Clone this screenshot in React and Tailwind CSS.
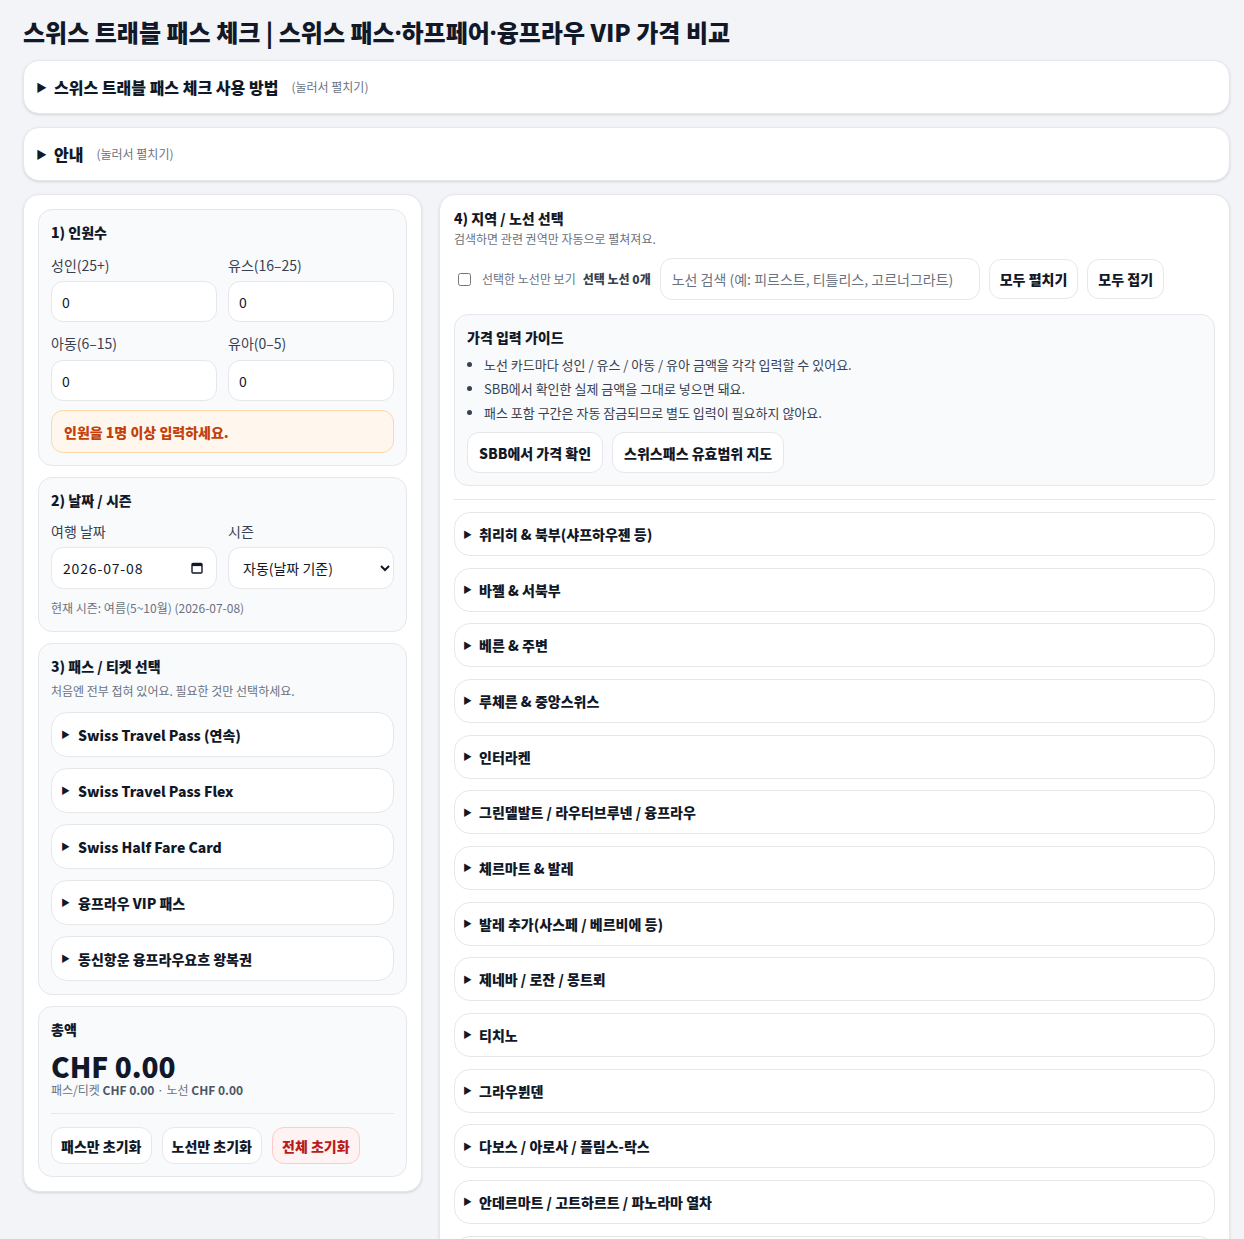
import React from 'react';

const regions = [
  '취리히 & 북부(샤프하우젠 등)',
  '바젤 & 서북부',
  '베른 & 주변',
  '루체른 & 중앙스위스',
  '인터라켄',
  '그린델발트 / 라우터브루넨 / 융프라우',
  '체르마트 & 발레',
  '발레 추가(사스페 / 베르비에 등)',
  '제네바 / 로잔 / 몽트뢰',
  '티치노',
  '그라우뷘덴',
  '다보스 / 아로사 / 플림스-락스',
  '안데르마트 / 고트하르트 / 파노라마 열차',
  '기타 노선',
];

const passes = [
  'Swiss Travel Pass (연속)',
  'Swiss Travel Pass Flex',
  'Swiss Half Fare Card',
  '융프라우 VIP 패스',
  '동신항운 융프라우요흐 왕복권',
];

// 접힌 상태의 카드형 summary
const Collapsed = ({ label, className = '', pad = 'px-[9px]', gap = 'mr-[8px]' }) => (
  <details className={`bg-white border border-[#e5e7eb] rounded-2xl ${className}`}>
    <summary className={`list-none flex items-center h-full cursor-pointer text-sm font-extrabold text-[#111827] ${pad}`}>
      <span className={`text-[9px] leading-none ${gap}`}>▶</span>
      {label}
    </summary>
  </details>
);

const Field = ({ label, children, gap = 'mb-[6px]' }) => (
  <div>
    <div className={`text-sm text-[#374151] leading-5 ${gap}`}>{label}</div>
    {children}
  </div>
);

const NumberInput = () => (
  <input
    type="text"
    defaultValue="0"
    className="w-full h-[41px] bg-white border border-[#e5e7eb] rounded-xl px-[10px] text-sm text-[#111827] outline-none"
  />
);

const Section = ({ title, children, className = 'pb-[12px]' }) => (
  <section className={`bg-[#f8fafc] border border-[#e5e7eb] rounded-[14px] px-[12px] pt-[12px] ${className}`}>
    <h3 className="text-sm font-extrabold text-[#111827] leading-5">{title}</h3>
    {children}
  </section>
);

const Btn = ({ children, className = '' }) => (
  <button className={`rounded-xl border text-sm font-extrabold ${className}`}>
    {children}
  </button>
);

const CalendarIcon = () => (
  <svg width="12" height="12" viewBox="0 0 12 12" fill="none">
    <rect x="1" y="1.5" width="10" height="9.5" rx="1" stroke="#111827" strokeWidth="1.4" />
    <rect x="1" y="1.5" width="10" height="2.6" fill="#111827" />
  </svg>
);

const App = () => {
  return (
    <div
      className="min-h-screen bg-[#f3f4f7] text-[#111827]"
      style={{ fontFamily: '"Noto Sans CJK KR", "Noto Sans", sans-serif' }}
    >
      <div className="pl-[23px] pr-[14px] pt-[16px]">
        <h1 className="text-2xl font-extrabold leading-8 mb-[11px]">
          스위스 트래블 패스 체크 | 스위스 패스<span className="font-['Noto_Sans']">·</span>하프페어<span className="font-['Noto_Sans']">·</span>융프라우 VIP 가격 비교
        </h1>

        {/* 상단 안내 */}
        <details className="bg-white border border-[#e5e7eb] rounded-2xl shadow-sm mb-[13px]">
          <summary className="list-none flex items-center h-[52px] px-[12px] cursor-pointer">
            <span className="text-[11px] mr-[7px]">▶</span>
            <span className="text-base font-extrabold">스위스 트래블 패스 체크 사용 방법</span>
            <span className="text-xs text-[#6b7280] ml-[13px]">(눌러서 펼치기)</span>
          </summary>
        </details>
        <details className="bg-white border border-[#e5e7eb] rounded-2xl shadow-sm mb-[13px]">
          <summary className="list-none flex items-center h-[52px] px-[12px] cursor-pointer">
            <span className="text-[11px] mr-[7px]">▶</span>
            <span className="text-base font-extrabold">안내</span>
            <span className="text-xs text-[#6b7280] ml-[13px]">(눌러서 펼치기)</span>
          </summary>
        </details>

        <div className="grid grid-cols-[399px_1fr] gap-[17px] items-start">
          {/* 왼쪽 패널 */}
          <div className="bg-white border border-[#e5e7eb] rounded-2xl shadow-sm p-[14px] flex flex-col gap-[11px]">
            <Section title="1) 인원수">
              <div className="grid grid-cols-2 gap-x-[11px] mt-[13px]">
                <Field label="성인(25+)"><NumberInput /></Field>
                <Field label="유스(16–25)"><NumberInput /></Field>
              </div>
              <div className="grid grid-cols-2 gap-x-[11px] mt-[11px]">
                <Field label="아동(6–15)" gap="mb-[7px]"><NumberInput /></Field>
                <Field label="유아(0–5)" gap="mb-[7px]"><NumberInput /></Field>
              </div>
              <div className="mt-[9px] h-[43px] flex items-center px-[12px] bg-[#fff7ed] border border-[#fed7aa] rounded-xl text-sm font-extrabold text-[#c2410c]">
                인원을 1명 이상 입력하세요.
              </div>
            </Section>

            <Section title="2) 날짜 / 시즌" className="pb-[15px]">
              <div className="grid grid-cols-2 gap-x-[11px] mt-[11px]">
                <Field label="여행 날짜">
                  <div className="w-full h-[42px] bg-white border border-[#e5e7eb] rounded-xl pl-[11px] pr-[13px] flex items-center justify-between text-sm tracking-[0.06em] text-[#111827]">
                    <span>2026-07-08</span>
                    <CalendarIcon />
                  </div>
                </Field>
                <Field label="시즌">
                  <select className="w-full h-[42px] bg-white border border-[#e5e7eb] rounded-xl px-[10px] text-sm text-[#111827] outline-none">
                    <option>자동(날짜 기준)</option>
                  </select>
                </Field>
              </div>
              <p className="text-xs text-[#6b7280] mt-[11px] leading-4">현재 시즌: 여름(5~10월) (2026-07-08)</p>
            </Section>

            <Section title="3) 패스 / 티켓 선택" className="pb-[13px]">
              <p className="text-xs text-[#6b7280] mt-[7px] leading-4">처음엔 전부 접혀 있어요. 필요한 것만 선택하세요.</p>
              <div className="flex flex-col gap-[11px] mt-[13px]">
                {passes.map((p) => (
                  <Collapsed key={p} label={p} className="h-[45px]" />
                ))}
              </div>
            </Section>

            <Section title="총액">
              <div className="text-[28px] font-black leading-[28px] mt-[13px]">CHF 0.00</div>
              <p className="text-xs text-[#6b7280] leading-4 mt-[2px]">
                패스/티켓 <b className="text-[#4b5563]">CHF 0.00</b> · 노선 <b className="text-[#4b5563]">CHF 0.00</b>
              </p>
              <div className="border-t border-[#e5e7eb] mt-[15px] mb-[13px]" />
              <div className="flex gap-[10px]">
                <Btn className="h-[37px] px-[9px] bg-white border-[#e5e7eb]">패스만 초기화</Btn>
                <Btn className="h-[37px] px-[9px] bg-white border-[#e5e7eb]">노선만 초기화</Btn>
                <Btn className="h-[37px] px-[9px] bg-[#fef2f2] border-[#fecaca] text-[#b91c1c]">전체 초기화</Btn>
              </div>
            </Section>
          </div>

          {/* 오른쪽 패널 */}
          <div className="bg-white border border-[#e5e7eb] rounded-2xl shadow-sm px-[14px] pt-[13px] pb-[14px]">
            <h3 className="text-sm font-extrabold leading-5">4) 지역 / 노선 선택</h3>
            <p className="text-xs text-[#6b7280] leading-4 mt-[3px]">검색하면 관련 권역만 자동으로 펼쳐져요.</p>

            <div className="flex items-center mt-[11px] gap-[9px]">
              <label className="flex items-center gap-[6px] pl-[4px] text-xs text-[#6b7280]">
                <input type="checkbox" className="w-[13px] h-[13px] mr-[5px]" />
                선택한 노선만 보기
              </label>
              <span className="text-xs font-extrabold text-[#374151] -ml-[2px]">선택 노선 0개</span>
              <input
                type="text"
                placeholder="노선 검색 (예: 피르스트, 티틀리스, 고르너그라트)"
                className="w-[320px] h-[42px] border border-[#e5e7eb] rounded-xl px-[11px] text-sm placeholder:text-[#6b7280] outline-none"
              />
              <Btn className="h-[40px] px-[10px] bg-white border-[#e5e7eb]">모두 펼치기</Btn>
              <Btn className="h-[40px] px-[10px] bg-white border-[#e5e7eb]">모두 접기</Btn>
            </div>

            {/* 가격 입력 가이드 */}
            <div className="mt-[14px] bg-[#f8fafc] border border-[#e5e7eb] rounded-[14px] px-[12px] pt-[12px] pb-[12px]">
              <h4 className="text-sm font-extrabold leading-5">가격 입력 가이드</h4>
              <ul className="list-disc pl-[17px] mt-[6px] text-[13px] text-[#374151] leading-6">
                <li>노선 카드마다 성인 / 유스 / 아동 / 유아 금액을 각각 입력할 수 있어요.</li>
                <li>SBB에서 확인한 실제 금액을 그대로 넣으면 돼요.</li>
                <li>패스 포함 구간은 자동 잠금되므로 별도 입력이 필요하지 않아요.</li>
              </ul>
              <div className="flex gap-[9px] mt-[7px]">
                <Btn className="h-[41px] bg-white border-[#e5e7eb] px-[11px]">SBB에서 가격 확인</Btn>
                <Btn className="h-[41px] bg-white border-[#e5e7eb] px-[11px]">스위스패스 유효범위 지도</Btn>
              </div>
            </div>

            <div className="border-t border-[#e5e7eb] mt-[13px] mb-[12px]" />

            <div className="flex flex-col gap-[11.67px]">
              {regions.map((r) => (
                <Collapsed key={r} label={r} className="h-[44px]" pad="px-[8px]" gap="mr-[7px]" />
              ))}
            </div>
          </div>
        </div>
      </div>
    </div>
  );
};

export default App;
